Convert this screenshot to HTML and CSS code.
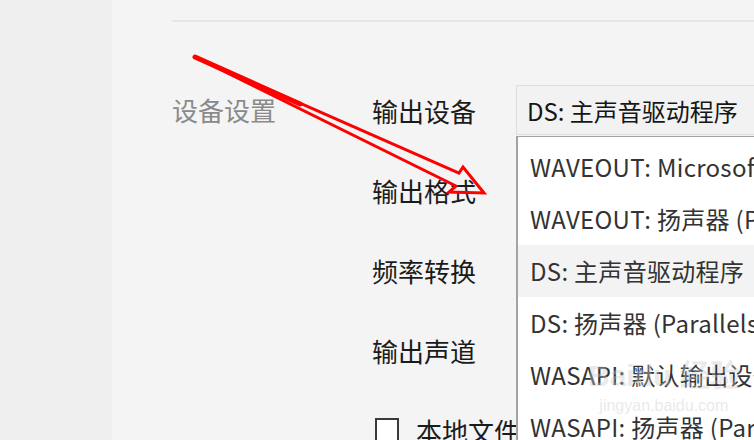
FILE: index.html
```html
<!DOCTYPE html>
<html lang="zh-CN">
<head>
    <meta charset="UTF-8">
    <meta name="viewport" content="width=device-width, initial-scale=1.0">
    <title>设备设置</title>
    <link rel="stylesheet" href="styles.css">
</head>
<body>
    <div class="app">
        <aside class="sidebar"></aside>
        <main class="main">
            <div class="divider"></div>
            <section class="settings">
                <div class="section-title">设备设置</div>
                <div class="rows">
                    <div class="row">
                        <span class="label">输出设备</span>
                        <div class="select">DS: 主声音驱动程序</div>
                    </div>
                    <div class="row"><span class="label">输出格式</span></div>
                    <div class="row"><span class="label">频率转换</span></div>
                    <div class="row"><span class="label">输出声道</span></div>
                    <div class="row check-row">
                        <span class="checkbox"></span>
                        <span class="label">本地文件缓存</span>
                    </div>
                </div>
            </section>

            <!-- open list of the output device select -->
            <ul class="dropdown">
                <li>WAVEOUT: Microsoft 声音映射器</li>
                <li>WAVEOUT: 扬声器 (Parallels Audio)</li>
                <li class="hover">DS: 主声音驱动程序</li>
                <li>DS: 扬声器 (Parallels Audio)</li>
                <li>WASAPI: 默认输出设备</li>
                <li>WASAPI: 扬声器 (Parallels Audio)</li>
            </ul>

            <div class="watermark">
                <span class="wm-logo">Bai<b>du</b> 经验</span>
                <span class="wm-url">jingyan.baidu.com</span>
            </div>
        </main>

        <svg class="arrow" width="754" height="440" viewBox="0 0 754 440">
            <path d="M195 57 L459 173 L463 167 L484 193 L449 192 L456 186 Z" fill="none" stroke="#ff0000" stroke-width="3" stroke-linejoin="miter"/>
            <path d="M195 57 L300 104" stroke="#ff0000" stroke-width="5" stroke-linecap="round"/>
        </svg>
    </div>
</body>
</html>
```

FILE: styles.css
```css
html, body { margin: 0; padding: 0; }
body { width: 754px; height: 440px; overflow: hidden; background: #f4f4f4; font-family: "Noto Sans CJK SC", sans-serif; }

.app { display: flex; width: 754px; height: 440px; position: relative; }
.sidebar { width: 112px; flex-shrink: 0; background: #efefef; }
.main { flex: 1; position: relative; overflow: hidden; padding-left: 60px; padding-top: 20px; }

.divider { height: 2px; background: #e6e6e6; }

.settings { display: flex; margin-top: 48px; }
.section-title { width: 200px; flex-shrink: 0; font-size: 26px; line-height: 80px; color: #8a8a8a; }

.rows { flex: 1; }
.row { display: flex; align-items: center; height: 80px; }
.label { width: 144px; flex-shrink: 0; font-size: 26px; color: #1b1b1b; white-space: nowrap; }

.select {
    width: 300px; height: 50px; flex-shrink: 0;
    box-sizing: border-box; padding-left: 10px;
    display: flex; align-items: center;
    background: #f2f2f2; border: 1px solid #dddddd;
    font-size: 24px; color: #161616; white-space: nowrap;
}

.check-row .checkbox {
    width: 20px; height: 20px; margin: 0 17px 0 3px;
    border: 2px solid #3a3a3a; background: #ffffff; flex-shrink: 0;
}

.dropdown {
    position: absolute; left: 404px; top: 136px;
    width: 300px; height: 320px; margin: 0; padding: 4px 0 0 0;
    list-style: none; background: #ffffff;
    border-left: 2px solid #a3a3a3; border-top: 1px solid #a3a3a3;
}
.dropdown li {
    height: 52px; line-height: 52px; padding-left: 12px;
    font-size: 24px; color: #333333; white-space: nowrap;
    letter-spacing: 0.3px;
}
.dropdown li.hover { background: #f3f3f3; }

.watermark {
    position: absolute; left: 476px; top: 358px;
    display: flex; flex-direction: column; align-items: center;
    color: rgba(200, 200, 200, 0.4); font-family: "Liberation Sans", sans-serif;
    pointer-events: none;
}
.wm-logo { font-size: 30px; font-weight: bold; line-height: 36px; }
.wm-logo b { font-weight: bold; }
.wm-url { font-size: 16px; line-height: 24px; }

.arrow { position: absolute; left: 0; top: 0; pointer-events: none; }
```
